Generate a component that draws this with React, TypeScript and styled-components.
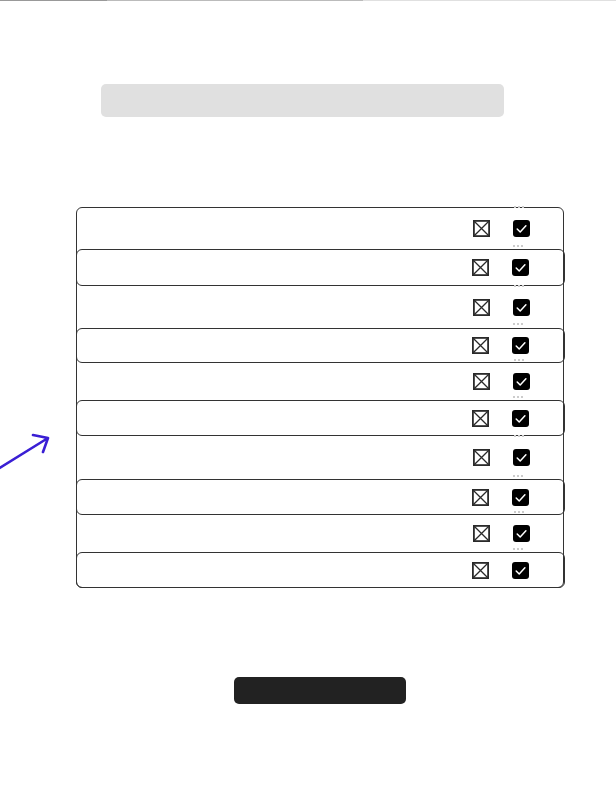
import styled, { createGlobalStyle } from 'styled-components';

const GlobalStyle = createGlobalStyle`
	html, body {
		margin: 0;
		padding: 0;
		background: #fff;
		font-family: 'Liberation Sans', Arial, sans-serif;
	}
`;

const Page = styled.div`
	position: relative;
	width: 616px;
	height: 785px;
	overflow: hidden;
`;

const Progress = styled.div`
	display: flex;
	height: 1px;
	background-color: #e0e0e0;
`;

const ProgressFill = styled.div<{ $width: number; $color: string }>`
	width: ${(p) => p.$width}px;
	background-color: ${(p) => p.$color};
`;

const Content = styled.div`
	display: flex;
	flex-direction: column;
	width: 488px;
	margin-left: 76px;
	padding-top: 83px;
`;

const SearchBar = styled.div`
	width: 403px;
	height: 33px;
	margin-left: 25px;
	background-color: #e0e0e0;
	border-radius: 5px;
`;

const List = styled.div`
	display: flex;
	flex-direction: column;
	margin-top: 90px;
	border: 1.5px solid #333;
	border-radius: 6px;
`;

const Row = styled.div<{ $height: number; $boxed?: boolean }>`
	display: flex;
	align-items: center;
	justify-content: flex-end;
	gap: 23px;
	height: ${(p) => p.$height}px;
	padding-right: 33px;
	box-sizing: border-box;
	${(p) =>
		p.$boxed &&
		`
		margin: 0 -1.5px;
		border: 1.5px solid #333;
		border-radius: 6px;
		padding-right: 34.5px;
		&:last-child {
			margin-bottom: -1.5px;
		}
	`}
`;

const CheckCell = styled.div`
	position: relative;
	display: flex;
	width: 17px;
	height: 17px;
`;

const Dots = styled.span`
	position: absolute;
	top: -14px;
	left: 0;
	width: 11px;
	height: 2px;
	background-image: radial-gradient(circle, #cccccc 0.9px, transparent 1px);
	background-size: 4px 2px;
`;

const Button = styled.button`
	align-self: center;
	width: 172px;
	height: 27px;
	margin-top: 89px;
	padding: 0;
	border: none;
	border-radius: 5px;
	background-color: #222;
	cursor: pointer;
`;

const Arrow = styled.svg`
	position: absolute;
	left: 0;
	top: 430px;
`;

function CrossBox() {
	return (
		<svg width="17" height="17" viewBox="0 0 17 17">
			<rect x="0.9" y="0.9" width="15.2" height="15.2" fill="none" stroke="#2a2a2a" strokeWidth="1.8" />
			<path d="M1.2 1.2 L15.8 15.8 M15.8 1.2 L1.2 15.8" stroke="#2a2a2a" strokeWidth="1.3" />
		</svg>
	);
}

function CheckedBox() {
	return (
		<svg width="17" height="17" viewBox="0 0 17 17">
			<rect width="17" height="17" rx="3" fill="#000" />
			<path d="M4.2 9 L7.2 12 L12.9 5.8" fill="none" stroke="#fff" strokeWidth="1.5" strokeLinecap="round" strokeLinejoin="round" />
		</svg>
	);
}

const rows = [41, 37, 42, 35, 37, 36, 43, 36, 37, 36];

function App() {
	return (
		<Page>
			<GlobalStyle />
			<Progress>
				<ProgressFill $width={107} $color="#999" />
				<ProgressFill $width={256} $color="#bbb" />
			</Progress>
			<Content>
				<SearchBar />
				<List>
					{rows.map((h, i) => (
						<Row key={i} $height={h} $boxed={i % 2 === 1}>
							<CrossBox />
							<CheckCell>
								<Dots />
								<CheckedBox />
							</CheckCell>
						</Row>
					))}
				</List>
				<Button title="Submit" />
			</Content>
			<Arrow width="56" height="44" viewBox="0 0 56 44">
				<path d="M-2 39 L48 8 M33 5 L48 8 L43 22" fill="none" stroke="#3a1fd4" strokeWidth="2.6" strokeLinecap="round" strokeLinejoin="round" />
			</Arrow>
		</Page>
	);
}

export default App;
